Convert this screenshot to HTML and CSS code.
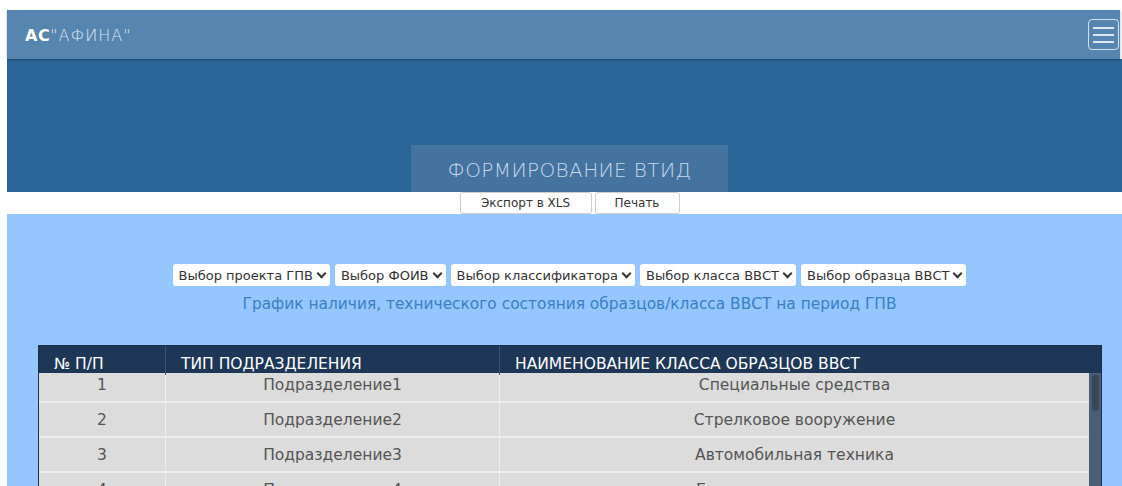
FILE: index.html
```html
<!DOCTYPE html>
<html lang="ru">
<head>
<meta charset="utf-8">
<title>АС "АФИНА"</title>
<link rel="stylesheet" href="styles.css">
</head>
<body>
<div class="page">
  <nav class="navbar">
    <div class="brand"><b>АС</b>"АФИНА"</div>
    <button class="burger" aria-label="Меню">
      <span></span><span></span><span></span>
    </button>
  </nav>
  <header class="hero">
    <h1 class="hero-title">ФОРМИРОВАНИЕ ВТИД</h1>
  </header>
  <div class="actions">
    <button class="btn btn-xls">Экспорт в XLS</button>
    <button class="btn btn-print">Печать</button>
  </div>
  <main class="content">
    <div class="filters">
      <button class="dd">Выбор проекта ГПВ <i class="caret"></i></button>
      <button class="dd">Выбор ФОИВ <i class="caret"></i></button>
      <button class="dd">Выбор классификатора <i class="caret"></i></button>
      <button class="dd">Выбор класса ВВСТ <i class="caret"></i></button>
      <button class="dd">Выбор образца ВВСТ <i class="caret"></i></button>
    </div>
    <p class="subtitle">График наличия, технического состояния образцов/класса ВВСТ на период ГПВ</p>
    <div class="grid">
      <div class="grid-head">
        <div class="c1">№ П/П</div>
        <div class="c2">ТИП ПОДРАЗДЕЛЕНИЯ</div>
        <div class="c3">НАИМЕНОВАНИЕ КЛАССА ОБРАЗЦОВ ВВСТ</div>
      </div>
      <div class="grid-body">
        <div class="rows">
          <div class="row"><div class="c1">1</div><div class="c2">Подразделение1</div><div class="c3">Специальные средства</div></div>
          <div class="row"><div class="c1">2</div><div class="c2">Подразделение2</div><div class="c3">Стрелковое вооружение</div></div>
          <div class="row"><div class="c1">3</div><div class="c2">Подразделение3</div><div class="c3">Автомобильная техника</div></div>
          <div class="row"><div class="c1">4</div><div class="c2">Подразделение4</div><div class="c3">Бронетанковая техника</div></div>
          <div class="row"><div class="c1">5</div><div class="c2">Подразделение5</div><div class="c3">Средства связи</div></div>
          <div class="row"><div class="c1">6</div><div class="c2">Подразделение6</div><div class="c3">Инженерная техника</div></div>
        </div>
        <div class="track"><div class="thumb"></div></div>
      </div>
    </div>
  </main>
</div>
</body>
</html>
```

FILE: styles.css
```css
html, body {
  margin: 0;
  overflow: hidden;
  background: #ffffff;
}

body {
  font-family: "DejaVu Sans", Verdana, sans-serif;
}

.page {
  width: 1125px;
  margin: 10px 0 0 7px;
}

/* top navigation bar */
.navbar {
  width: 1113px;
  height: 49px;
  background: #5685af;
  display: flex;
  align-items: center;
  justify-content: space-between;
  box-sizing: border-box;
  padding: 0 1px 0 18px;
  position: relative;
  z-index: 1;
  box-shadow: 0 1px 2px rgba(0, 0, 0, 0.35);
}

.brand {
  color: #dfe8f1;
  font-size: 16px;
  letter-spacing: 1px;
  font-weight: 300;
  padding-top: 2px;
}

.brand b {
  color: #ffffff;
  font-weight: 600;
  letter-spacing: 0.5px;
}

.burger {
  width: 31px;
  height: 31px;
  box-sizing: border-box;
  border: 1px solid rgba(255, 255, 255, 0.75);
  border-radius: 4px;
  background: transparent;
  display: flex;
  flex-direction: column;
  justify-content: center;
  align-items: center;
  gap: 5px;
  padding: 0;
}

.burger span {
  display: block;
  width: 21px;
  height: 2px;
  background: rgba(255, 255, 255, 0.8);
}

/* dark title band */
.hero {
  height: 133px;
  background: #2b6699;
  display: flex;
  justify-content: center;
  align-items: flex-end;
}

.hero-title {
  margin: 0;
  width: 317px;
  height: 47px;
  background: #44739f;
  color: #c9d8e8;
  font-size: 20px;
  font-weight: 200;
  letter-spacing: 0.4px;
  display: flex;
  align-items: center;
  justify-content: center;
  padding-top: 2px;
  box-sizing: border-box;
}

/* export / print buttons */
.actions {
  height: 22px;
  display: flex;
  justify-content: center;
  gap: 3px;
}

.btn {
  height: 22px;
  box-sizing: border-box;
  border: 1px solid #cfcfcf;
  border-radius: 3px;
  background: #ffffff;
  font-family: "DejaVu Sans", Verdana, sans-serif;
  font-size: 12px;
  color: #333;
  padding: 0;
}

.btn-xls { width: 132px; }
.btn-print { width: 85px; }

/* light blue work area */
.content {
  background: #95c6ff;
  padding-top: 50px;
  height: 400px;
}

.filters {
  display: flex;
  justify-content: center;
  gap: 5px;
}

.dd {
  height: 22px;
  box-sizing: border-box;
  border: none;
  border-radius: 3px;
  background: #ffffff;
  font-family: "DejaVu Sans", Verdana, sans-serif;
  font-size: 13px;
  color: #333;
  padding: 0 5px 0 6px;
  display: flex;
  align-items: center;
  gap: 4px;
}

.caret {
  display: inline-block;
  width: 5px;
  height: 5px;
  border-right: 2px solid #333;
  border-bottom: 2px solid #333;
  transform: rotate(45deg);
  margin-top: -4px;
  margin-left: 1px;
}

.subtitle {
  margin: 9px 0 0;
  text-align: center;
  color: #3a7fc3;
  font-size: 15.4px;
  line-height: 18px;
}

/* data grid */
.grid {
  margin: 32px 30px 0 31px;
  border: 1px solid #1b2f49;
  border-bottom: none;
}

.grid-head {
  display: flex;
  height: 27px;
  background: #1f3757;
  color: #ffffff;
  font-size: 15.5px;
  position: relative;
  z-index: 1;
}

.grid-head > div {
  box-sizing: border-box;
  padding: 0 0 0 15px;
  line-height: 17px;
  height: 27px;
  display: flex;
  align-items: flex-end;
}

.grid-head .c2,
.grid-head .c3 {
  border-left: 1px solid #2f5680;
  height: 29px;
  padding-bottom: 2px;
}

.c1 { width: 126px; flex: none; }
.c2 { width: 334px; flex: none; }
.c3 { flex: 1; }

.grid-body {
  height: 200px;
  margin-top: -5px;
  display: flex;
  background: #4b5e77;
}

.rows {
  flex: 1;
  overflow: hidden;
}

/* vertical scrollbar of the grid */
.track {
  width: 12px;
  flex: none;
  background: #4b5e77;
  padding: 7px 2px 0 3px;
  box-sizing: border-box;
}

.thumb {
  height: 36px;
  border-radius: 3px;
  background: #394657;
}

.row {
  display: flex;
  height: 35px;
  background: #dcdcdc;
  border-bottom: 2px solid #eeeeee;
  box-sizing: border-box;
  color: #555555;
  font-size: 15.5px;
  align-items: center;
}

.row > div {
  text-align: center;
  box-sizing: border-box;
}

.row .c2,
.row .c3 {
  border-left: 1px solid #eeeeee;
  height: 100%;
  display: flex;
  align-items: center;
  justify-content: center;
}
```
